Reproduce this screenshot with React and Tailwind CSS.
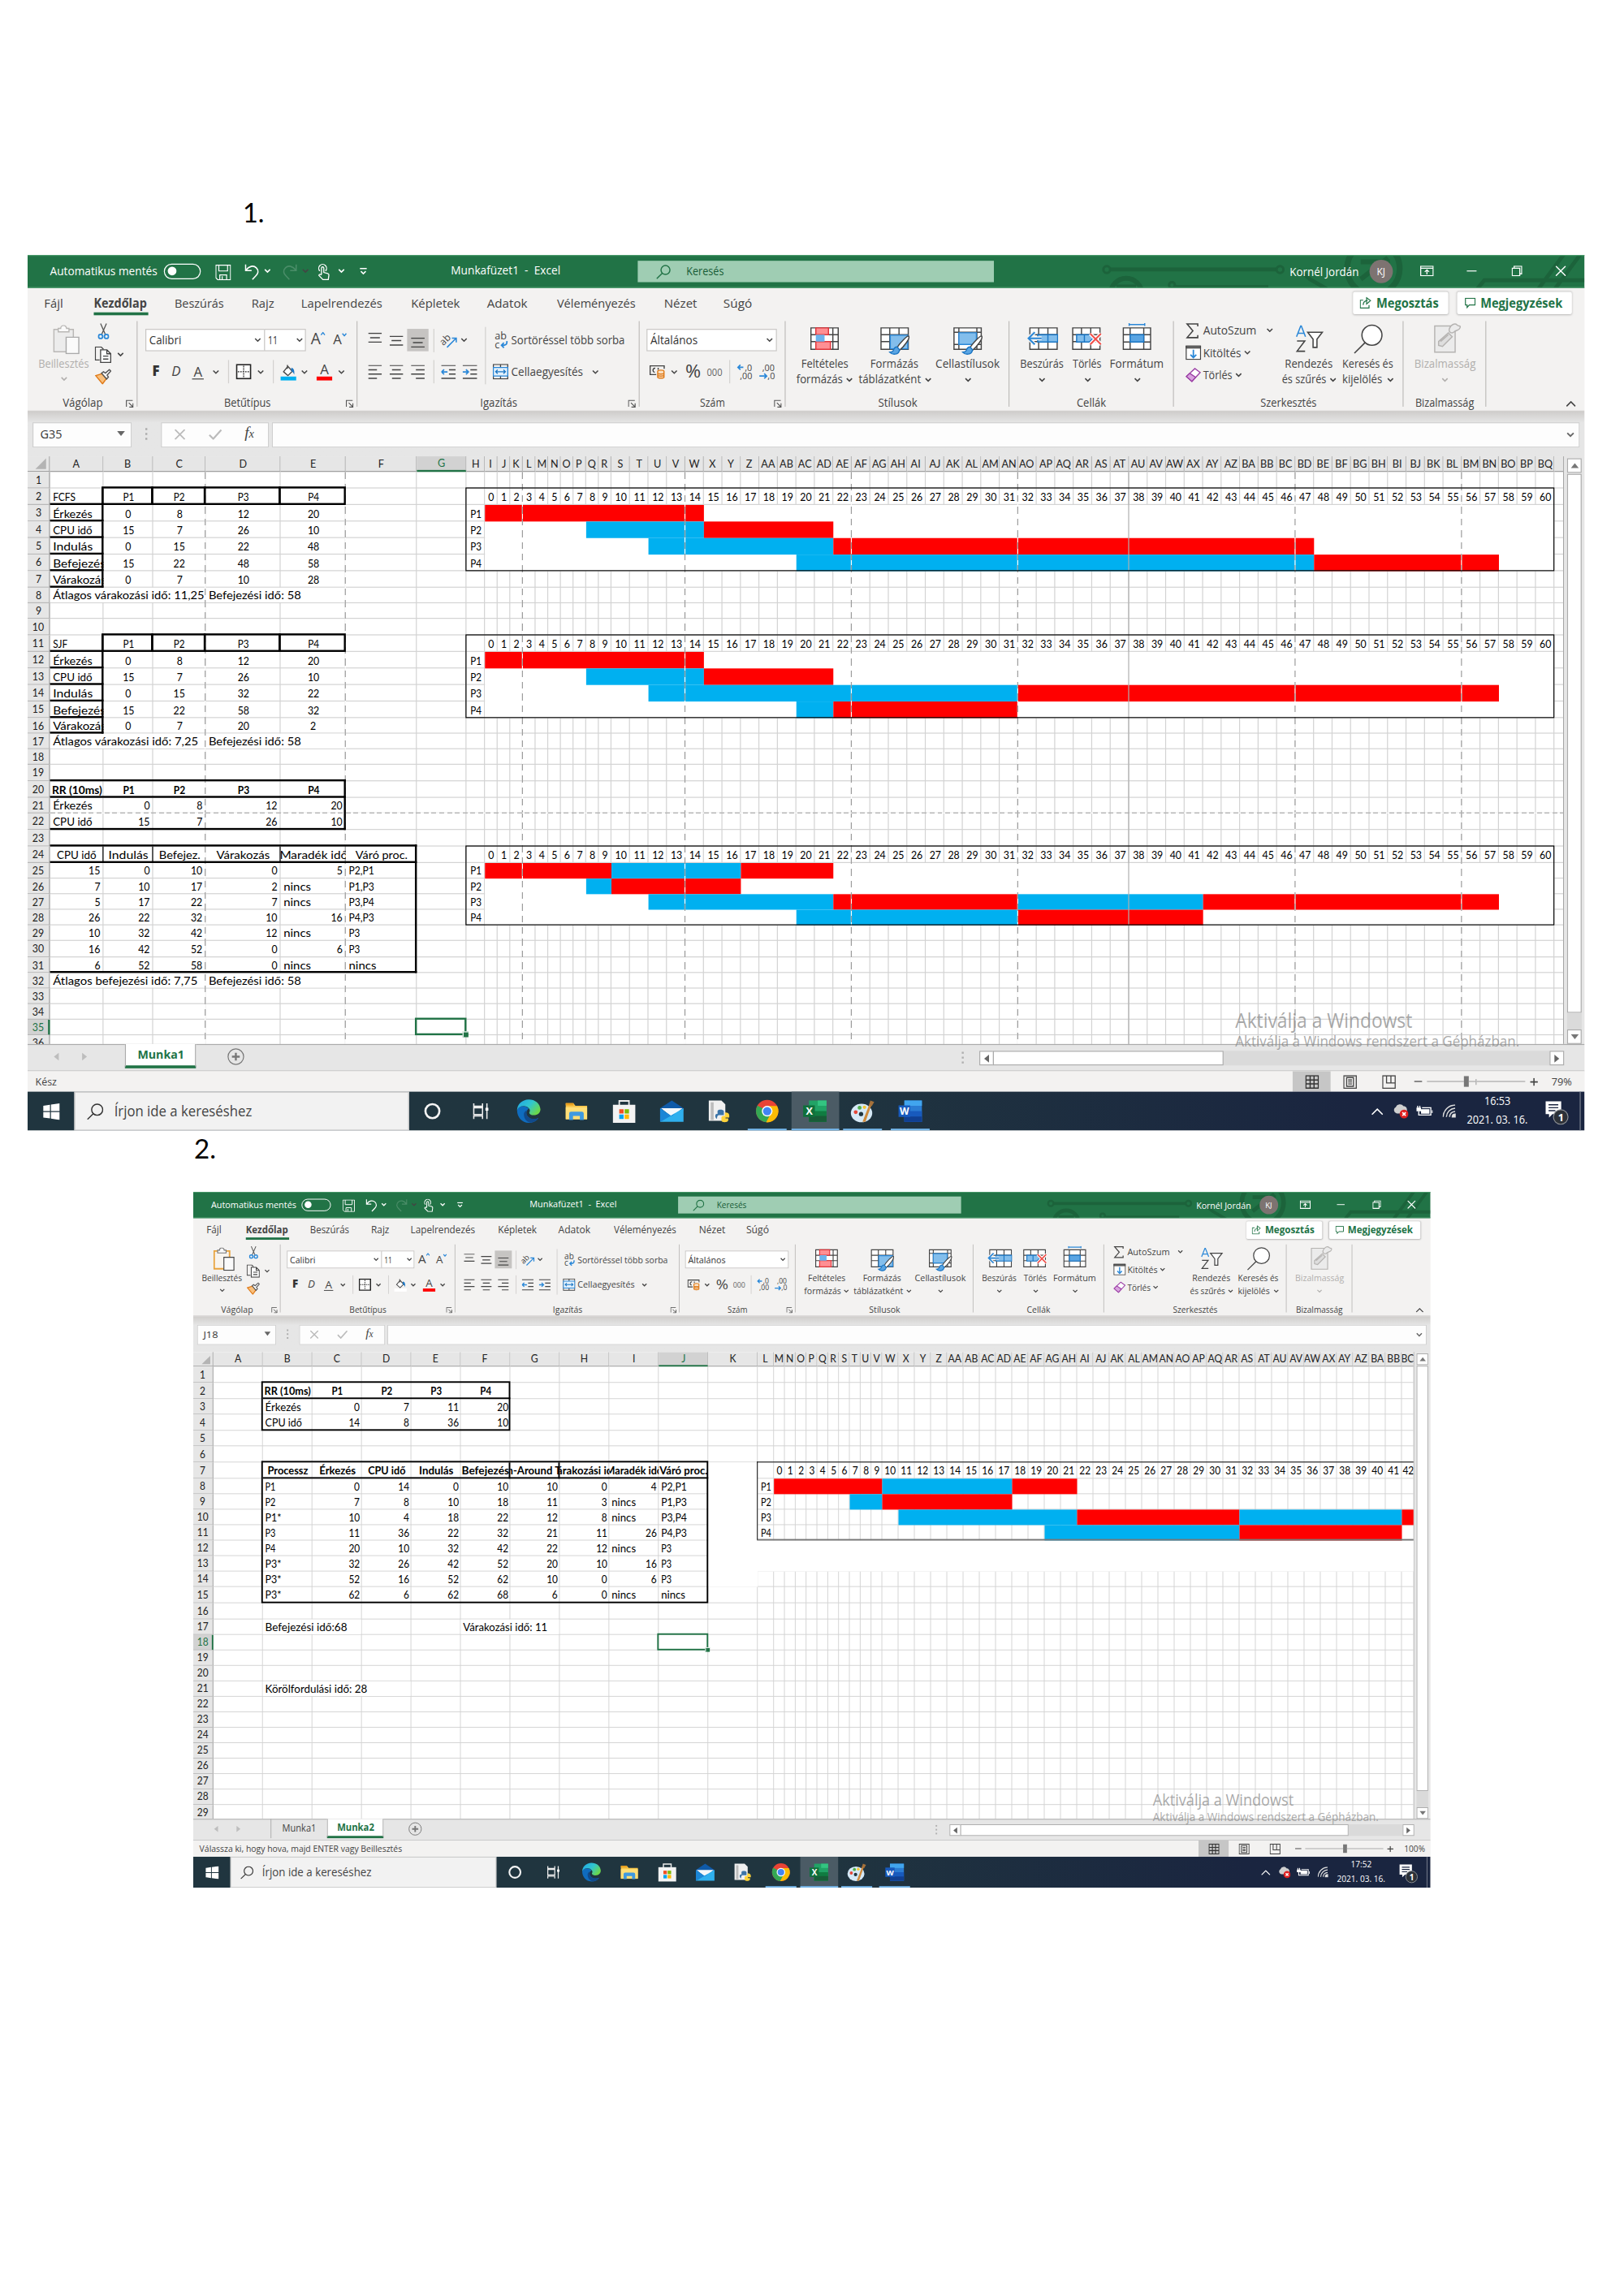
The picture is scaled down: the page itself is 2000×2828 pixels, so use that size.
import React, { useLayoutEffect, useRef } from "react";

/* ---------- text that keeps a given width ---------- */
function Fit({ w, children, className = "" }) {
  const outer = useRef(null);
  const inner = useRef(null);
  useLayoutEffect(() => {
    if (!w) return;
    inner.current.style.transform = "none";
    const a = outer.current.getBoundingClientRect().width;
    const b = inner.current.getBoundingClientRect().width;
    inner.current.style.transform = "scaleX(" + a / b + ")";
  }, [w, children]);
  if (!w) return <span className={"whitespace-pre " + className}>{children}</span>;
  return (
    <span ref={outer} className={"block shrink-0 text-left " + className} style={{ width: w }}>
      <span ref={inner} className="inline-block origin-left whitespace-pre align-top">{children}</span>
    </span>
  );
}

const Chev = ({ className = "" }) => (
  <svg viewBox="0 0 7 5" className={"h-[5px] w-[7px] shrink-0 fill-none stroke-[#444] " + className} strokeWidth="1.3"><path d="M.8.9 3.5 3.6 6.2.9" /></svg>
);
const Launcher = () => (
  <svg viewBox="0 0 8 8" className="h-2 w-2 fill-none stroke-[#555]" strokeWidth="1"><path d="M.5 7V.5H7M3 3l4 4M7.3 3.5v3.9H3.5" /></svg>
);

/* ---------- title bar ---------- */
function TitleBar() {
  return (
    <div className="relative flex h-[34px] w-full shrink-0 items-center overflow-hidden border-t border-b border-[#4b9a6c] bg-[#217346] text-[11.4px] leading-none text-white">
      <svg viewBox="0 0 1600 34" className="absolute top-0 left-0 h-[34px] w-[1600px] fill-none stroke-[#1c633b]" strokeWidth="4">
        <circle cx="1109" cy="14" r="3.5" strokeWidth="2.5" /><path d="M1113 14h170" /><circle cx="1287" cy="14" r="3.5" strokeWidth="2.5" />
        <circle cx="1129" cy="39" r="16" strokeWidth="5" /><path d="M1119 32h20" strokeWidth="5" />
        <circle cx="1176" cy="30" r="3" strokeWidth="2.5" /><path d="M1180 32h95M1306 14l12 10 24 14" />
        <circle cx="1383" cy="13" r="27" strokeWidth="6" /><path d="M1370 6h30M1370 24l28-22" strokeWidth="5" />
        <path d="M1488 36l9-11h103M1551 36l28-38M1568 36l28-38" />
      </svg>
      <div className="relative flex h-full w-full items-center pb-[1px]">
        <Fit w={110.3} className="ml-[23px]">Automatikus mentés</Fit>
        <div className="ml-[7px] flex h-[16px] w-[38px] items-center rounded-full border border-white pl-[3px]"><div className="h-[9px] w-[9px] rounded-full bg-white" /></div>
        <svg viewBox="0 0 16 16" className="mt-[3px] ml-[15px] h-4 w-4 fill-none stroke-white" strokeWidth="1"><path d="M.5.5h15v15H2.5L.5 13.500zM3.500.500v6h9v-6M4.500 15.500v-5h7v5M7 12v3" /></svg>
        <svg viewBox="0 0 15 17" className="mt-[1px] ml-[14px] h-[17px] w-[15px] fill-none stroke-white" strokeWidth="1.300"><path d="M1 .800v6.200h6.200M1.300 6.700C4.500 2.500 9 1.300 12 4.200s1.800 6-.500 8.300L8 16.200" /></svg>
        <Chev className="ml-[5px] stroke-white" />
        <svg viewBox="0 0 15 17" className="mt-[1px] ml-[12px] h-[17px] w-[15px] fill-none stroke-[#4a8d68]" strokeWidth="1.300"><path d="M14 .800v6.200H7.800M13.700 6.700C10.500 2.500 6 1.300 3 4.200s-1.800 6 .500 8.300L7 16.200" /></svg>
        <Chev className="ml-[5px] stroke-[#4a8d68]" />
        <svg viewBox="0 0 13 17" className="mt-[2px] ml-[9px] h-[17px] w-[13px] fill-none stroke-white" strokeWidth="1.100"><path d="M4 11V4.500a1.200 1.200 0 0 1 2.400 0V9l4 1c1 .300 1.300.800 1.200 1.700l-.600 4.700H5.500L1.300 12c.400-1.300 1.500-1.300 2.700-.300M2.300 7.500a4 4 0 1 1 5.800 0" /></svg>
        <Chev className="ml-[8px] stroke-white" />
        <svg viewBox="0 0 8 8" className="ml-[15px] h-2 w-2 fill-none stroke-white" strokeWidth="1.200"><path d="M.5 1h7M1.500 3.800 4 6.300l2.500-2.500" /></svg>
        <Fit w={112.5} className="-mt-px ml-[86px]">Munkafüzet1  -  Excel</Fit>
        <div className="mt-[1px] ml-[79px] flex h-[22px] w-[366px] items-center bg-[#9fcdb3] text-[#185c37]">
          <svg viewBox="0 0 15 15" className="ml-[19px] h-[15px] w-[15px] fill-none stroke-[#217346]" strokeWidth="1.200"><circle cx="9.500" cy="5.500" r="4.600" /><path d="M6.200 8.800.500 14.500" /></svg>
          <Fit w={38.500} className="ml-[16px]">Keresés</Fit>
        </div>
        <Fit w={71} className="mt-[2px] ml-[304px]">Kornél Jordán</Fit>
        <div className="ml-[11px] flex h-6 w-6 items-center justify-center rounded-full bg-[#7d7371] text-[10px]">KJ</div>
        <svg viewBox="0 0 14 11" className="ml-[28px] h-[11px] w-[14px] fill-none stroke-white" strokeWidth="1.100"><path d="M.6.600h12.800v9.800H.600zM.600 2.600h12.800M7 9V4.500M4.800 6.400 7 4.300l2.200 2.100" /></svg>
        <div className="ml-[34px] h-px w-[10px] bg-white" />
        <svg viewBox="0 0 11 11" className="ml-[36px] h-[11px] w-[11px] fill-none stroke-white" strokeWidth="1.100"><path d="M.600 2.600h7.800v7.800H.600zM2.600 2.600v-2h7.800v7.800h-2" /></svg>
        <svg viewBox="0 0 11 11" className="ml-[34px] h-[11px] w-[11px] fill-none stroke-white" strokeWidth="1.200"><path d="m.5.500 10 10M10.500.500l-10 10" /></svg>
      </div>
    </div>
  );
}

/* ---------- ribbon tabs ---------- */
function Tabs() {
  return (
    <div className="flex h-[27px] shrink-0 items-center text-[12.800px] leading-none text-[#444]">
      <Fit w={19.400} className="mt-[3px] ml-[17px]">Fájl</Fit>
      <div className="mt-[7px] ml-[32px] flex h-[21px] flex-col justify-between">
        <Fit w={54.500} className="mt-[2px] font-bold">Kezdőlap</Fit>
        <div className="h-[3px] w-[56px] bg-[#217346]" />
      </div>
      <Fit w={50.700} className="mt-[3px] ml-[27px]">Beszúrás</Fit>
      <Fit w={23.500} className="mt-[3px] ml-[28px]">Rajz</Fit>
      <Fit w={83.500} className="mt-[3px] ml-[27.500px]">Lapelrendezés</Fit>
      <Fit w={50.300} className="mt-[3px] ml-[29px]">Képletek</Fit>
      <Fit w={41.700} className="mt-[3px] ml-[28.500px]">Adatok</Fit>
      <Fit w={80.700} className="mt-[3px] ml-[29.500px]">Véleményezés</Fit>
      <Fit w={34} className="mt-[3px] ml-[29.500px]">Nézet</Fit>
      <Fit w={29.500} className="mt-[3px] ml-[27.500px]">Súgó</Fit>
      <div className="mt-[3px] ml-[617px] flex h-[23px] w-[98px] items-center rounded-xs bg-white font-bold text-[#217346] shadow-[0_0_2px_rgba(0,0,0,.25)]">
        <svg viewBox="0 0 12 12" className="ml-[7px] h-3 w-3 fill-none stroke-[#217346]" strokeWidth="1"><path d="M3.500 3.500H.500v8h9v-3M3.500 8.500c0-3 2-4.500 4.500-4.500M7 1l4 3-4 3.500z" /></svg>
        <Fit w={64} className="ml-[5px]">Megosztás</Fit>
      </div>
      <div className="mt-[3px] ml-[9px] flex h-[23px] w-[118px] items-center rounded-xs bg-white font-bold text-[#217346] shadow-[0_0_2px_rgba(0,0,0,.25)]">
        <svg viewBox="0 0 12 12" className="ml-[8px] h-[11px] w-[11px] fill-none stroke-[#217346]" strokeWidth="1.100"><path d="M.6.600h10.800v7.500H5l-2.500 2.800V8.100H.600z" /></svg>
        <Fit w={84.300} className="ml-[5px]">Megjegyzések</Fit>
      </div>
    </div>
  );
}

/* ---------- ribbon icons ---------- */
const Paste = ({ dim }) => (
  <svg viewBox="0 0 28 30" className="h-[30px] w-[28px] fill-none" strokeWidth="1.200">
    <path d="M1 4.500h20v23H1z" stroke={dim ? "#b9b7b5" : "#e8a33d"} strokeWidth={dim ? 1.200 : 2} fill={dim ? "#ececec" : "#f8f4ee"} />
    <path d="M5.500 7V3.500H8a3 3 0 0 1 6 0h2.500V7z" stroke={dim ? "#b9b7b5" : "#777"} fill="#fafafa" />
    <path d="M13.600 12.600h13v16.800h-13z" stroke={dim ? "#aaa" : "#444"} fill="#fafafa" />
  </svg>
);
const Cut = () => (
  <svg viewBox="0 0 12 17" className="h-[17px] w-[12px] fill-none stroke-[#555]" strokeWidth="1.100"><path d="M3 .5 8 12M9 .5 4 12" /><g className="stroke-[#2b88d8]" strokeWidth="1.500"><circle cx="3" cy="13.800" r="2.100" /><circle cx="9" cy="13.800" r="2.100" /></g></svg>
);
const Copy = () => (
  <svg viewBox="0 0 17 17" className="h-[17px] w-[17px] fill-none stroke-[#444]" strokeWidth="1.100"><path d="M5 14H.600V.600h6L9 3" /><path d="M6 3.600h6.500l3.900 3.900v8.900H6zM12.400 3.800v3.800h3.800M8.500 10h5.500M8.500 13h5.500" fill="#fff" /></svg>
);
const Painter = () => (
  <svg viewBox="0 0 17 16" className="h-4 w-[17px] fill-none stroke-[#555]" strokeWidth="1.200"><path d="m1 7 6.500-2 4.500 5-4 5.500z" className="fill-[#f9c07d] stroke-[#e07b1a]" /><path d="m7 4.500 2-1.500 2 1.500L15 .800l1.500 1.500L12.700 6.500l1.300 2-1.800 2z" fill="#fff" /></svg>
);
const Lines = ({ kind }) => {
  const d = { top: "M0 .600h14M2 5.100h10M0 9.600h14", left: "M0 .600h14M0 5h9M0 9.400h14M0 13.800h9", center: "M0 .600h14M2.500 5h9M0 9.400h14M2.500 13.800h9", right: "M0 .600h14M5 5h9M0 9.400h14M5 13.800h9" }[kind];
  return <svg viewBox="0 0 14 15" className="h-[15px] w-[14px] shrink-0 fill-none stroke-[#444]" strokeWidth="1.200"><path d={d} /></svg>;
};
const Indent = ({ flip }) => (
  <svg viewBox="0 0 15 15" className="h-[15px] w-[15px] fill-none" strokeWidth="1.200"><path d="M0 .600h15M8 5h7M8 9.400h7M0 13.800h15" className="stroke-[#444]" /><path d={flip ? "M0 7.200h6M3.500 4.700 6 7.200 3.500 9.700" : "M.5 7.200h6M3 4.700.5 7.200 3 9.700"} className="stroke-[#2b88d8]" strokeWidth="1.400" /></svg>
);
const GridIcon = ({ children }) => (
  <svg viewBox="0 0 32 34" className="h-[34px] w-[32px] fill-none stroke-[#444]" strokeWidth="1.200">{children}</svg>
);
const Brush = () => (
  <g><path d="M30.500 13.500c-1.500-1-10 8-12 12l2.500 2.500c4-3 11-12 9.500-14.500z" fill="#fff" /><path d="M18.500 24.500c-3 0-3.500 2.500-4 4-.500 1-2 1.500-3.500 1.500 2.500 3 9.500 3 10-2.500z" className="fill-[#5aa5e3] stroke-[#1b76c4]" /></g>
);
const icons = {
  cond: <GridIcon><path d="M2 5h28v22H2zM2 12h28M2 19h28M8 5v22M24.500 5v22" fill="#fff" /><path d="M7 5h13v7H7zM7 19h15v8H7z" className="fill-[#ff8f93] stroke-[#e0343a]" /><path d="M7 12h9v7H7z" className="fill-[#6db3ec] stroke-none" /></GridIcon>,
  table: <GridIcon><path d="M2 5h28v22H2zM2 12h28M2 19h28M11 5v22M20.500 5v22" fill="#fff" /><path d="M11.500 12.500h18v14h-18z" className="fill-[#83beec] stroke-[#2b88d8]" /><Brush /></GridIcon>,
  styles: <GridIcon><path d="M2 5h28v22H2zM2 9.500h28M2 22h28M7 5v22M25.500 5v22" fill="#fff" /><path d="M7 10h18v12H7z" className="fill-[#83beec] stroke-[#2b88d8]" /><Brush /></GridIcon>,
  insert: <GridIcon><path d="M3 5h28v22H3zM3 12h28M3 19h28M12 5v22M21.500 5v22" fill="#fff" /><path d="M11 12h20.500v7.500H11zM21.500 12v7.500" className="fill-[#83beec] stroke-[#1b76c4]" /><path d="M15 15.700H1.500M8 9.500l-6.500 6.200L8 22" className="stroke-[#f3f2f1]" strokeWidth="4" /><path d="M15 15.700H1.500M8 9.500l-6.500 6.200L8 22" className="stroke-[#2b88d8]" strokeWidth="1.700" /></GridIcon>,
  del: <GridIcon><path d="M1 5h28v22H1zM1 12h28M1 19h28M10 5v22M19.500 5v22" fill="#fff" /><path d="M5 12h13l4 3.700-4 3.800H5zM13 12v7" className="fill-[#83beec] stroke-[#1b76c4]" /><path d="m19 11 11 11M30 11 19 22" className="stroke-white" strokeWidth="4" /><path d="m19 11 11 11M30 11 19 22" className="stroke-[#f0504a]" strokeWidth="1.700" /></GridIcon>,
  format: <GridIcon><path d="M2 5h28v22H2zM2 12h28M2 19.500h28M9 5v22M23 5v22" fill="#fff" /><path d="M9 12h14v7.500H9z" className="fill-[#5aa5e3] stroke-[#1b76c4]" /><path d="M8 1.500h16M8 0v3M24 0v3" className="stroke-[#2b88d8]" /></GridIcon>,
  sort: <svg viewBox="0 0 32 34" className="h-[34px] w-[32px] fill-none stroke-[#444]" strokeWidth="1.300"><path d="m3 14 4.300-11h.600L12.200 14M4.600 10.500h6" className="stroke-[#2b88d8]" /><path d="M3.500 18.500h8L3.500 29h8.300" /><path d="M14.500 9.500h15l-5.500 7v8.500h-4v-8.500z" fill="#fff" /></svg>,
  find: <svg viewBox="0 0 32 34" className="h-[34px] w-[32px] fill-none stroke-[#444]" strokeWidth="1.300"><circle cx="19.500" cy="12.500" r="10.300" fill="#fff" /><path d="M12.500 20 1.500 31" /></svg>,
  sens: <svg viewBox="0 0 32 34" className="h-[34px] w-[32px] fill-[#ebebeb] stroke-[#b5b3b1]" strokeWidth="1.200"><path d="M5 3h21v27H5z" /><path d="m9 19 10-9 4 4-10 10-4-1zM11 19l8-7" fill="#dedede" /><path d="M20 6c2-5 6-6 8-4s4 0 3 3-4 2-6 4-6 1-5-3z" /></svg>,
};
const Clr = { dim: "text-[#b1afad]", norm: "text-[#444]" };
function Big({ icon, a, wa, b, wb, cls, dim }) {
  return (
    <div className={"flex shrink-0 flex-col items-center " + cls + " " + (dim ? Clr.dim : Clr.norm)}>
      <div className="mt-[9px] h-[34px]">{icon}</div>
      <div className="mt-[1px] flex h-[14px] items-center"><Fit w={wa}>{a}</Fit></div>
      <div className="mt-[2px] flex h-[14px] items-center gap-[4px]">{b && <Fit w={wb}>{b}</Fit>}<Chev className={dim ? "stroke-[#b1afad]" : ""} /></div>
    </div>
  );
}
function Group({ cls, label, lw, launcher, children }) {
  return (
    <div className={"relative flex h-[99px] shrink-0 flex-col justify-between " + cls}>
      {children}
      <div className="flex h-[16px] items-center justify-center"><Fit w={lw}>{label}</Fit></div>
      {launcher && <div className="absolute right-[4px] bottom-[3px]"><Launcher /></div>}
      <div className="absolute top-[7px] right-0 h-[88px] w-px bg-[#bfbdbb]" />
    </div>
  );
}
const Sep = ({ cls }) => <div className={"h-[24px] w-px shrink-0 bg-[#d3d1cf] " + cls} />;

function Ribbon({ second }) {
  return (
    <div className="flex h-[99px] shrink-0 text-[11.300px] leading-none text-[#444]">
      <Group cls="w-[113px]" label="Vágólap" lw={41.300} launcher>
        <div className="flex">
          <div className={"ml-[9px] flex w-[56px] flex-col items-center " + (second ? "" : "text-[#b1afad]")}>
            <div className="mt-[11px] ml-[5px]"><Paste dim={!second} /></div>
            <div className="mt-[3px] flex h-[14px] items-center"><Fit w={52}>Beillesztés</Fit></div>
            <Chev className={"mt-[6px] " + (second ? "" : "stroke-[#b1afad]")} />
          </div>
          <div className="mt-[9px] ml-[4px] flex flex-col gap-[6.500px]">
            <div className="ml-[3px]"><Cut /></div>
            <div className="flex items-center gap-[6px]"><Copy /><Chev /></div>
            <Painter />
          </div>
        </div>
      </Group>
      <Group cls="w-[226px]" label="Betűtípus" lw={47.800} launcher>
        <div className="flex flex-col gap-[9px]">
          <div className="mt-[15px] ml-[8px] flex h-[23px] items-center">
            <div className="flex h-full w-[123px] items-center justify-between border border-[#c8c6c4] bg-white pr-[3px] pl-[3px] text-[#333]"><Fit w={33}>Calibri</Fit><Chev /></div>
            <div className="-ml-px flex h-full w-[43px] items-center justify-between border border-[#c8c6c4] bg-white pr-[2px] pl-[3px] text-[#333]"><Fit w={10}>11</Fit><Chev /></div>
            <div className="-mt-[3px] ml-[5px] flex w-[16px] text-[16px]"><span>A</span><svg viewBox="0 0 5 4" className="mt-px h-1 w-[5px] shrink-0 fill-none stroke-[#2b88d8]" strokeWidth="1.200"><path d="M.5 3.300 2.500.800l2 2.500" /></svg></div>
            <div className="-mt-px ml-[7px] flex w-[16px] items-start text-[14px]"><span>A</span><svg viewBox="0 0 5 4" className="h-1 w-[5px] shrink-0 fill-none stroke-[#2b88d8]" strokeWidth="1.200"><path d="M.5.700 2.500 3.200l2-2.500" /></svg></div>
          </div>
          <div className="flex h-[24px] items-center text-[14px]">
            <span className="-mt-[2px] ml-[15px] w-[8px] font-extrabold text-[#333]">F</span>
            <span className="-mt-[2px] ml-[12px] w-[11px] italic">D</span>
            <span className="ml-[10px] w-[12px] border-b border-[#444] text-center">A</span>
            <Chev className="ml-[9px]" />
            <Sep cls="ml-[9px]" />
            <svg viewBox="0 0 16 16" className="ml-[7px] h-4 w-4 fill-white stroke-[#222]" strokeWidth="1.500"><path d="M.8.800h14.400v14.400H.800z" /><path d="M8 2v12M2 8h12" strokeWidth="1" strokeDasharray="1.500 1" /></svg>
            <Chev className="ml-[6px]" />
            <Sep cls="ml-[9px]" />
            <div className="ml-[7px] flex w-4 flex-col items-center">
              <svg viewBox="0 0 16 13" className="h-[13px] w-4 fill-none stroke-[#444]" strokeWidth="1.100"><path d="M7 1v4M7.500 2.500 3 8l4.500 4L12 7.500 7.500 2.500z" fill="#fff" /><path d="M11 4c2.500 0 3.500 3 3 7-1-2-1.500-3-3-3.500z" className="fill-[#1b76c4] stroke-none" /></svg>
              <div className={"h-[4px] w-4 " + (second ? "bg-white" : "bg-[#00b0f0]")} />
            </div>
            <Chev className="ml-[5px]" />
            <div className="ml-[9px] flex w-4 flex-col items-center"><span className="h-[13px] leading-[12px]">A</span><div className="h-[4px] w-4 bg-[#ff0000]" /></div>
            <Chev className="ml-[6px]" />
          </div>
        </div>
      </Group>
      <Group cls="w-[290px]" label="Igazítás" lw={38.300} launcher>
        <div className="flex">
          <div className="flex flex-col gap-[9px]">
            <div className="mt-[15px] flex h-[23px] items-center">
              <div className="ml-[11px]"><Lines kind="top" /></div>
              <div className="mt-[5px] ml-[8px]"><Lines kind="top" /></div>
              <div className="ml-[4px] flex h-[23px] w-[22px] items-end justify-center bg-[#c6c4c2]"><div className="-mb-[1px]"><Lines kind="top" /></div></div>
              <Sep cls="ml-[5px]" />
              <svg viewBox="0 0 17 16" className="ml-[7px] h-4 w-[17px] overflow-visible fill-none stroke-[#2b88d8]" strokeWidth="1.300"><text x="-1" y="10" transform="rotate(-45 5 8)" className="fill-[#444] stroke-none text-[10px]">ab</text><path d="m6 15 9-9M11 5.500h4.500V10" /></svg>
              <Chev className="ml-[3px]" />
            </div>
            <div className="flex h-[24px] items-center">
              <div className="ml-[11px]"><Lines kind="left" /></div>
              <div className="ml-[8px]"><Lines kind="center" /></div>
              <div className="ml-[8px]"><Lines kind="right" /></div>
              <Sep cls="ml-[9px]" />
              <div className="ml-[7px]"><Indent /></div>
              <div className="ml-[7px]"><Indent flip /></div>
            </div>
          </div>
          <div className="mt-[13px] ml-[8px] h-[59px] w-px bg-[#d3d1cf]" />
          <div className="flex flex-col gap-[9px]">
            <div className="mt-[15px] flex h-[23px] items-center">
              <svg viewBox="0 0 14 18" className="ml-[9px] h-[18px] w-[14px] overflow-visible fill-none stroke-[#2b88d8]" strokeWidth="1.500"><text x="0" y="8" className="fill-[#444] stroke-none text-[10.500px]">ab</text><text x="0" y="17" className="fill-[#444] stroke-none text-[10.500px]">c</text><path d="M12.500 9.500c.500 4-2 4.500-5.500 4.300M9.500 11.200 7 13.800l2.500 2.600" /></svg>
              <Fit w={116.700} className="ml-[3px]">Sortöréssel több sorba</Fit>
            </div>
            <div className="flex h-[24px] items-center">
              <svg viewBox="0 0 16 16" className="ml-[7px] h-4 w-4 fill-none stroke-[#444]" strokeWidth="1.100"><path d="M.6.600h14.800v14.800H.600zM8 .600v14.800" /><path d="M.6 3.600h14.800v8.800H.600z" className="fill-[#e3f1fc] stroke-[#2b88d8]" /><path d="M3 8h10M5 6 3 8l2 2M11 6l2 2-2 2" className="stroke-[#1b76c4]" /></svg>
              <Fit w={73.800} className="ml-[3px]">Cellaegyesítés</Fit>
              <Chev className="ml-[9px]" />
            </div>
          </div>
        </div>
      </Group>
      <Group cls="w-[150px]" label="Szám" lw={25.600} launcher>
        <div className="flex flex-col gap-[9px]">
          <div className="mt-[15px] ml-[7px] flex h-[23px] w-[134px] items-center justify-between border border-[#c8c6c4] bg-white px-[3px] text-[#333]"><Fit w={48.500}>Általános</Fit><Chev /></div>
          <div className="flex h-[24px] items-center">
            <svg viewBox="0 0 16 16" className="ml-[10px] h-4 w-4 fill-none stroke-[#444]" strokeWidth="1.200"><path d="M7 11H.700V2h14.500v3M6 4.500c-3-.500-3 4-.500 4M9 4v2" /><path d="M8.500 7.500c0-1.500 6.500-1.500 6.500 0v6c0 1.500-6.500 1.500-6.500 0zM8.500 9.500c0 1.300 6.500 1.300 6.500 0M8.500 11.500c0 1.300 6.500 1.300 6.500 0" className="fill-[#fbe0c0] stroke-[#e07b1a]" /></svg>
            <Chev className="ml-[6px]" />
            <Fit w={16} className="-mt-[2px] ml-[8px] text-[18px]">%</Fit>
            <Fit w={16} className="-mt-px ml-[6px] text-[10px] text-[#666]">000</Fit>
            <Sep cls="ml-[7px]" />
            <svg viewBox="0 0 16 16" className="ml-[7px] h-4 w-4 overflow-visible fill-none stroke-[#2b88d8]" strokeWidth="1.400"><path d="M6.500 3.500H1M3.500 1 1 3.500 3.500 6" /><text x="8" y="7" className="fill-[#444] stroke-none text-[9px]">,0</text><text x="3" y="15.500" className="fill-[#444] stroke-none text-[9px]">,00</text></svg>
            <svg viewBox="0 0 16 16" className="ml-[7px] h-4 w-4 overflow-visible fill-none stroke-[#2b88d8]" strokeWidth="1.400"><path d="M0 12.500h7.500M5 10l2.500 2.500L5 15" /><text x="3" y="7" className="fill-[#444] stroke-none text-[9px]">,00</text><text x="8.500" y="15.500" className="fill-[#444] stroke-none text-[9px]">,0</text></svg>
          </div>
        </div>
      </Group>
      <Group cls="w-[230px]" label="Stílusok" lw={40.300}>
        <div className="flex">
          <Big cls="w-[80px]" icon={icons.cond} a="Feltételes" wa={48.500} b="formázás" wb={47.700} />
          <Big cls="w-[64px]" icon={icons.table} a="Formázás" wa={49.400} b="táblázatként" wb={64} />
          <Big cls="w-[86px]" icon={icons.styles} a="Cellastílusok" wa={66} />
        </div>
      </Group>
      <Group cls="w-[169px]" label="Cellák" lw={30.200}>
        <div className="flex">
          <Big cls="w-[67px]" icon={icons.insert} a="Beszúrás" wa={44.600} />
          <Big cls="w-[26px]" icon={icons.del} a="Törlés" wa={29.500} />
          <Big cls="w-[76px]" icon={icons.format} a="Formátum" wa={55.500} />
        </div>
      </Group>
      <Group cls="w-[236px]" label="Szerkesztés" lw={57.600}>
        <div className="flex">
          <div className="mt-[5px] flex w-[109px] flex-col pl-[12px]">
            <div className="flex h-[23px] items-center">
              <svg viewBox="0 0 14 16" className="h-4 w-[14px] fill-none stroke-[#444]" strokeWidth="1.300"><path d="M12.500 3.500V1h-11l6 7-6 7h11v-2.500" /></svg>
              <Fit w={54.800} className="ml-[4px]">AutoSzum</Fit><Chev className="ml-[10px]" />
            </div>
            <div className="flex h-[23px] items-center">
              <svg viewBox="0 0 16 15" className="h-[15px] w-4 fill-white stroke-[#444]" strokeWidth="1.100"><path d="M.6.600h14.800v13.800H.600z" /><path d="M.6.600h14.800v2H.600z" fill="#777" /><path d="M8 4.500v8M5 9.500l3 3 3-3" className="fill-none stroke-[#2b88d8]" strokeWidth="1.500" /></svg>
              <Fit w={39} className="ml-[2px]">Kitöltés</Fit><Chev className="ml-[3px]" />
            </div>
            <div className="flex h-[23px] items-center">
              <svg viewBox="0 0 16 15" className="h-[15px] w-4 fill-white stroke-[#9b3fa5]" strokeWidth="1.100"><path d="M.8 9 9.500.800l5.500 4L6.500 14z" /><path d="m.8 9 3.500-3.300 6 4L6.500 14z" className="fill-[#d9a3df]" /></svg>
              <Fit w={30} className="ml-[2px]">Törlés</Fit><Chev className="ml-[3px]" />
            </div>
          </div>
          <Big cls="w-[60px]" icon={icons.sort} a="Rendezés" wa={49.100} b="és szűrés" wb={45.600} />
          <Big cls="w-[61px]" icon={icons.find} a="Keresés és" wa={52.300} b="kijelölés" wb={41.100} />
        </div>
      </Group>
      <Group cls="w-[85px]" label="Bizalmasság" lw={60.400}>
        <Big cls="w-full" icon={icons.sens} a="Bizalmasság" wa={63.200} dim />
      </Group>
      <svg viewBox="0 0 10 6" className="mt-[89px] ml-[82px] h-[6px] w-[10px] fill-none stroke-[#444]" strokeWidth="1.300"><path d="M.5 5.500 5 1l4.500 4.500" /></svg>
    </div>
  );
}

function FormulaBar({ name, nw }) {
  const box = "flex h-[26px] items-center border border-[#cfcfcf] bg-[#fdfdfd]";
  return (
    <div className="flex h-[47px] shrink-0 items-start border-t border-[#d0cecc] bg-linear-to-b from-[#cfcdcb] from-0% to-[#e6e6e6] to-25% pt-[10.500px] text-[11.300px] leading-none text-[#333]">
      <div className={box + " ml-[5px] w-[102px] justify-between pr-[6px] pl-[7px]"}><Fit w={nw}>{name}</Fit><div className="mb-[3px] h-0 w-0 border-x-4 border-t-[5px] border-x-transparent border-t-[#666]" /></div>
      <div className="mt-[6px] ml-[14px] flex w-[2px] flex-col gap-[3px]"><i className="h-[2px] bg-[#aaa]" /><i className="h-[2px] bg-[#aaa]" /><i className="h-[2px] bg-[#aaa]" /></div>
      <div className={box + " ml-[14px] w-[111px]"}>
        <svg viewBox="0 0 11 11" className="ml-[13px] h-[11px] w-[11px] fill-none stroke-[#bbb]" strokeWidth="1.500"><path d="m.5.500 10 10M10.500.500l-10 10" /></svg>
        <svg viewBox="0 0 14 11" className="ml-[24px] h-[11px] w-[14px] fill-none stroke-[#bbb]" strokeWidth="1.800"><path d="m.8 6 4 4L13 .800" /></svg>
        <span className="-mt-[3px] ml-[23px] font-['Liberation_Serif',serif] text-[16px] text-[#444] italic">f<span className="text-[12px]">x</span></span>
      </div>
      <div className={box + " ml-[3px] w-[1344px] justify-end pr-[4px]"}><Chev className="h-[6px] w-[9px] stroke-[#666]" /></div>
    </div>
  );
}

/* ---------- worksheet ---------- */
const colName = (i) => (i < 26 ? "" : String.fromCharCode(64 + Math.floor(i / 26))) + String.fromCharCode(65 + (i % 26));
const at = (c, r, c2 = c, r2 = r) => ({ gridColumn: c + 2 + " / " + (c2 + 3), gridRow: r + 1 + " / " + (r2 + 2) });
const just = { l: "justify-start", c: "justify-center", r: "justify-end" };
const origin = { l: "origin-left", c: "origin-center", r: "origin-right" };

function Sheet({ s }) {
  const nc = s.cols.length;
  const nr = s.rows.length;
  const tpl = {
    gridTemplateColumns: s.head + "px " + s.cols.map((w) => w + "px").join(" "),
    gridTemplateRows: s.headH + "px " + s.rows.map((h) => h + "px").join(" "),
  };
  return (
    <div className={"grid h-[604px] w-[1579px] shrink-0 overflow-hidden border-r border-[#9f9f9f] bg-white font-['Lato',sans-serif] leading-none text-black " + s.font} style={tpl}>
      <div className="flex items-end justify-end border-r border-b border-[#9f9f9f] bg-[#e6e6e6] pr-[3px] pb-[2px]" style={at(-1, 0)}>
        <div className="h-0 w-0 border-b-[11px] border-l-[11px] border-b-[#b4b4b4] border-l-transparent" />
      </div>
      {s.cols.map((_, i) => (
        <div key={i} style={at(i, 0)} className={"flex items-center justify-center overflow-hidden border-r border-r-[#b8b8b8] " + (i === s.sel[0] ? "border-b-2 border-b-[#217346] bg-[#d2d2d2] text-[#217346]" : "border-b border-b-[#9f9f9f] bg-[#e6e6e6] text-[#222]")}>
          <span className="shrink-0 scale-x-[0.9]">{i === s.hideCol ? "" : colName(i)}</span>
        </div>
      ))}
      {s.rows.map((_, i) => (
        <div key={i} style={at(-1, i + 1)} className={"flex items-center justify-center overflow-hidden border-b border-b-[#b8b8b8] " + (i + 1 === s.sel[1] ? "border-r-2 border-r-[#217346] bg-[#d2d2d2] text-[#217346]" : "border-r border-r-[#9f9f9f] bg-[#e6e6e6] text-[#222]")}>
          <span className="shrink-0 scale-x-[0.88]">{i + 1}</span>
        </div>
      ))}
      {s.cols.map((_, i) => <div key={i} style={at(i, 1, i, nr)} className="border-r border-[#d3d3d3]" />)}
      {s.rows.map((_, i) => <div key={i} style={at(0, i + 1, nc - 1, i + 1)} className="border-b border-[#d3d3d3]" />)}
      {s.blank.map((b, i) => <div key={i} style={at(...b)} className="bg-white" />)}
      {s.bars.map(([c, r, c2, k], i) => <div key={i} style={at(c, r, c2)} className={k === "r" ? "bg-[#ff0000]" : "bg-[#00b0f0]"} />)}
      {s.clear.map((b, i) => <div key={i} style={at(...b)} className="mr-px mb-px bg-white" />)}
      {s.breaks.map((b, i) => (
        <div key={i} style={at(b[0], 1, b[0], nr)} className={b[1] ? "border-r border-[#b0b0b0]" : "border-r border-white"} />
      ))}
      {s.breaks.filter((b) => !b[1]).map((b, i) => (
        <div key={i} style={at(b[0], 1, b[0], nr)} className="flex justify-end"><div className="h-full w-px bg-[repeating-linear-gradient(to_bottom,#9c9c9c_0_7px,transparent_7px_12px)]" /></div>
      ))}
      {s.hbreak > 0 && <div style={at(0, s.hbreak, nc - 1, s.hbreak)} className="flex items-end"><div className="h-px w-full bg-[repeating-linear-gradient(to_right,#b0b0b0_0_5px,#fff_5px_8px)]" /></div>}
      {s.boxes.map(([c, r, c2, r2, cls], i) => <div key={i} style={at(c, r, c2, r2)} className={"border-black " + cls} />)}
      {s.cells.map(([c, r, text, al = "l", c2 = c, bold], i) => {
        const w = s.widths[(bold ? "*" : "") + text];
        return (
          <div key={i} style={at(c, r, c2)} className={"flex items-center overflow-hidden " + just[al] + (al === "l" ? " pl-[3px]" : al === "r" ? " pr-[3px]" : "") + (bold ? " font-bold" : "")}>
            <Fit w={w} className={"shrink-0 " + (w ? "" : "scale-x-[0.88] " + origin[al])}>{text}</Fit>
          </div>
        );
      })}
      <div style={at(...s.sel)} className="relative -mt-[2px] -ml-[2px] border-2 border-[#217346]"><div className="absolute -right-[4px] -bottom-[4px] h-[6px] w-[6px] border-t border-l border-white bg-[#217346]" /></div>
    </div>
  );
}

const fill = (n, v) => Array(n).fill(v);
const M = "-ml-[2px] -mt-[2px] border-2";
const axis = (row, first, n) => fill(n, 0).map((_, i) => [first + i, row, String(i), "c"]);
const procs = (col, row) => ["P1", "P2", "P3", "P4"].map((p, i) => [col, row + i, p, "c"]);
/* bar: [row, from, to, colour] on a time axis whose zero is column `zero` */
const gantt = (zero, list) => list.map(([r, a, b, k]) => [zero + a, r, zero + b - 1, k]);

const summary = (row, title, data) => [
  [0, row, title],
  ...["P1", "P2", "P3", "P4"].map((p, i) => [1 + i, row, p, "c"]),
  ...["Érkezés", "CPU idő", "Indulás", "Befejezés", "Várakozás"].map((t, i) => [0, row + 1 + i, t]),
  ...data.flatMap((line, j) => line.map((v, i) => [1 + i, row + 1 + j, String(v), "c"])),
];
const summaryBoxes = (row) => [
  ...[1, 2, 3, 4].map((c) => [c, row, c, row, M]),
  ...[0, 1, 2, 3, 4, 5].map((i) => [0, row + i, 0, row + i, "border-r-2 border-b-2"]),
];
const mixed = (c0, r0, rows) => rows.flatMap((line, j) => line.map((v, i) => [c0 + i, r0 + j, String(v), typeof v === "number" ? "r" : "l"]));

const sheet1 = {
  head: 23, headH: 16, font: "text-[11.700px]",
  cols: [55, 51, 54, 77, 67, 73, 51, 19, ...fill(10, 13), ...fill(51, 19), 10],
  rows: [17, ...fill(6, 17), 16, 16, 17, ...fill(5, 17), 16, 16, 16, 17, 17, 16, 17, 17, 17, 16, 16, 16, 16, 16, 17, 16, 16, 16, 16, 16, 16],
  sel: [6, 35], hideCol: 69,
  blank: [[8, 3, 68, 6], [8, 12, 68, 15], [8, 25, 68, 28]],
  clear: [[0, 8, 2, 8], [3, 8, 4, 8], [0, 17, 2, 17], [3, 17, 4, 17], [0, 32, 2, 32], [3, 32, 4, 32]],
  bars: gantt(8, [
    [3, 0, 15, "r"], [4, 8, 15, "b"], [4, 15, 22, "r"], [5, 12, 22, "b"], [5, 22, 48, "r"], [6, 20, 48, "b"], [6, 48, 58, "r"],
    [12, 0, 15, "r"], [13, 8, 15, "b"], [13, 15, 22, "r"], [14, 12, 32, "b"], [14, 32, 58, "r"], [15, 20, 22, "b"], [15, 22, 32, "r"],
    [25, 0, 10, "r"], [25, 10, 17, "b"], [25, 17, 22, "r"], [26, 8, 10, "b"], [26, 10, 17, "r"], [27, 12, 22, "b"], [27, 22, 32, "r"], [27, 32, 42, "b"], [27, 42, 58, "r"], [28, 20, 32, "b"], [28, 32, 42, "r"],
  ]),
  breaks: [[2], [4], [10], [21], [30], [39], [45, true], [54], [63]],
  hbreak: 21,
  boxes: [
    ...summaryBoxes(2), ...summaryBoxes(11),
    [0, 20, 4, 22, "-mt-[2px] border-y-2 border-r-2"], [0, 20, 4, 20, "border-b-2"],
    [0, 24, 5, 31, "-mt-[2px] border-y-2 border-r-2"], [0, 24, 5, 24, "border-b-2"],
    [0, 24, 0, 24, "border-r"], [1, 24, 1, 24, "border-r"], [3, 24, 3, 24, "border-r"],
    [7, 2, 68, 6, "-ml-px -mt-px border"], [7, 11, 68, 15, "-ml-px -mt-px border"], [7, 24, 68, 28, "-ml-px -mt-px border"],
  ],
  cells: [
    ...summary(2, "FCFS", [[0, 8, 12, 20], [15, 7, 26, 10], [0, 15, 22, 48], [15, 22, 48, 58], [0, 7, 10, 28]]),
    [0, 8, "Átlagos várakozási idő: 11,25", "l", 2], [3, 8, "Befejezési idő: 58", "l", 4],
    ...summary(11, "SJF", [[0, 8, 12, 20], [15, 7, 26, 10], [0, 15, 32, 22], [15, 22, 58, 32], [0, 7, 20, 2]]),
    [0, 17, "Átlagos várakozási idő: 7,25", "l", 2], [3, 17, "Befejezési idő: 58", "l", 4],
    ...["RR (10ms)", "P1", "P2", "P3", "P4"].map((t, i) => [i, 20, t, "c", i, true]),
    ...mixed(0, 21, [["Érkezés", 0, 8, 12, 20], ["CPU idő", 15, 7, 26, 10]]),
    ...["CPU idő", "Indulás", "Befejez.", "Várakozás", "Maradék idő", "Váró proc."].map((t, i) => [i, 24, t, "c"]),
    ...mixed(0, 25, [[15, 0, 10, 0, 5, "P2,P1"], [7, 10, 17, 2, "nincs", "P1,P3"], [5, 17, 22, 7, "nincs", "P3,P4"], [26, 22, 32, 10, 16, "P4,P3"], [10, 32, 42, 12, "nincs", "P3"], [16, 42, 52, 0, 6, "P3"], [6, 52, 58, 0, "nincs", "nincs"]]),
    [0, 32, "Átlagos befejezési idő: 7,75", "l", 2], [3, 32, "Befejezési idő: 58", "l", 4],
    ...axis(2, 8, 61), ...axis(11, 8, 61), ...axis(24, 8, 61),
    ...procs(7, 3), ...procs(7, 12), ...procs(7, 25),
  ],
  widths: {
    "Érkezés": 40.500, "CPU idő": 40.500, "Indulás": 41, "Befejezés": 54, "Várakozás": 54.800, "Befejez.": 42.500, "Maradék idő": 70, "Váró proc.": 53.500,
    "Átlagos várakozási idő: 11,25": 155.600, "Átlagos várakozási idő: 7,25": 149.300, "Átlagos befejezési idő: 7,75": 148.700, "Befejezési idő: 58": 95,
    "*RR (10ms)": 51.600, nincs: 28.300, "P2,P1": 26.200, "P1,P3": 26.200, "P3,P4": 26.200, "P4,P3": 26.200, P1: 11.500, P2: 11.500, P3: 11.500, P4: 11.500, FCFS: 23.200, SJF: 15,
    "*P1": 12, "*P2": 12, "*P3": 12, "*P4": 12,
  },
};

const sheet2 = {
  head: 26, headH: 19, font: "text-[14.200px]",
  cols: [...fill(11, 64), 21, ...fill(10, 14), ...fill(32, 21), 16],
  rows: [21, 21, 20, 21, 20, 21, 21, ...fill(7, 20), 21, 21, ...fill(13, 20)],
  sel: [9, 18], hideCol: -1,
  blank: [[10, 8, 10, 14], [10, 12, 54, 13]],
  clear: [[10, 7, 10, 8], [1, 17, 2, 17], [5, 17, 6, 17], [1, 21, 3, 21]],
  bars: gantt(12, [
    [8, 0, 10, "r"], [8, 10, 18, "b"], [8, 18, 22, "r"], [9, 7, 10, "b"], [9, 10, 18, "r"],
    [10, 11, 22, "b"], [10, 22, 32, "r"], [10, 32, 42, "b"], [10, 42, 43, "r"], [11, 20, 32, "b"], [11, 32, 42, "r"],
  ]),
  breaks: [], hbreak: 0,
  boxes: [
    [1, 2, 5, 4, M], [1, 2, 5, 2, "border-b-2"], [1, 7, 9, 15, M], [1, 7, 9, 7, "border-b-2"],
    [5, 7, 5, 7, "border-r-2"], [6, 7, 6, 7, "border-r-2"],
    [11, 7, 54, 11, "-ml-px -mt-px border-t border-l border-b-2 border-b-[#777]"],
  ],
  cells: [
    ...["RR (10ms)", "P1", "P2", "P3", "P4"].map((t, i) => [1 + i, 2, t, "c", 1 + i, true]),
    ...mixed(1, 3, [["Érkezés", 0, 7, 11, 20], ["CPU idő", 14, 8, 36, 10]]),
    ...["Processz", "Érkezés", "CPU idő", "Indulás", "Befejezés", "Turn-Around Time", "Várakozási idő", "Maradék idő", "Váró proc."].map((t, i) => [1 + i, 7, t, "c", 1 + i, true]),
    ...mixed(1, 8, [
      ["P1", 0, 14, 0, 10, 10, 0, 4, "P2,P1"], ["P2", 7, 8, 10, 18, 11, 3, "nincs", "P1,P3"], ["P1*", 10, 4, 18, 22, 12, 8, "nincs", "P3,P4"],
      ["P3", 11, 36, 22, 32, 21, 11, 26, "P4,P3"], ["P4", 20, 10, 32, 42, 22, 12, "nincs", "P3"], ["P3*", 32, 26, 42, 52, 20, 10, 16, "P3"],
      ["P3*", 52, 16, 52, 62, 10, 0, 6, "P3"], ["P3*", 62, 6, 62, 68, 6, 0, "nincs", "nincs"],
    ]),
    [1, 17, "Befejezési idő:68", "l", 2], [5, 17, "Várakozási idő: 11", "l", 6], [1, 21, "Körölfordulási idő: 28", "l", 3],
    ...axis(7, 12, 43), ...procs(11, 8),
  ],
  widths: {
    "*RR (10ms)": 60, "Érkezés": 46.500, "CPU idő": 47.500, "*Processz": 52.500, "*Érkezés": 47, "*CPU idő": 48.500, "*Indulás": 44.500, "*Befejezés": 61.500,
    "*Turn-Around Time": 112, "*Várakozási idő": 88, "*Maradék idő": 74, "*Váró proc.": 62, "P2,P1": 33.300, "P1,P3": 33.300, "P3,P4": 33.300, "P4,P3": 33.300,
    nincs: 31.400, P1: 13.500, P2: 13.500, P3: 13.500, P4: 13.500, "P1*": 21, "P3*": 21, "*P1": 14.500, "*P2": 14.500, "*P3": 14.500, "*P4": 14.500,
    "Befejezési idő:68": 106, "Várakozási idő: 11": 109, "Körölfordulási idő: 28": 132,
  },
};

/* ---------- below the grid ---------- */
const Arrow = ({ cls }) => <div className={"h-0 w-0 " + cls} />;
function TabStrip({ second }) {
  const active = (t) => (
    <div className="flex h-[25px] w-[73px] flex-col items-center justify-between border-x border-b-[3px] border-x-[#ababab] border-b-[#217346] bg-white pt-[5px] font-bold text-[#217346]"><Fit w={48}>{t}</Fit></div>
  );
  return (
    <div className="flex h-[28px] shrink-0 items-start border-b border-[#c8c8c8] bg-[#e6e6e6] text-[12.500px] leading-none">
      <div className="flex h-full w-full items-start border-t border-[#ababab]">
        <Arrow cls="mt-[8px] ml-[27px] border-y-4 border-r-[5px] border-y-transparent border-r-[#bdbdbd]" />
        <Arrow cls="mt-[8px] ml-[24px] border-y-4 border-l-[5px] border-y-transparent border-l-[#bdbdbd]" />
        <div className="-mt-px ml-[39px] flex">
          {second && <div className="flex h-[25px] w-[73px] items-center justify-center border-l border-[#ababab] text-[#444]"><Fit w={44}>Munka1</Fit></div>}
          {active(second ? "Munka2" : "Munka1")}
        </div>
        <svg viewBox="0 0 18 18" className="mt-[3px] ml-[32px] h-[18px] w-[18px] fill-none stroke-[#777]"><circle cx="9" cy="9" r="8" /><path d="M9 5v8M5 9h8" strokeWidth="2" /></svg>
        <div className="flex-1" />
        <div className="mt-[7px] flex w-[2px] flex-col gap-[3px]"><i className="h-[2px] bg-[#b0b0b0]" /><i className="h-[2px] bg-[#b0b0b0]" /><i className="h-[2px] bg-[#b0b0b0]" /></div>
        <div className="mt-[6px] mr-[21px] ml-[16px] flex h-[15px] w-[601px] bg-[#dadada]">
          <div className="flex w-[15px] items-center justify-center border border-[#ababab] bg-white"><Arrow cls="border-y-4 border-r-[5px] border-y-transparent border-r-[#666]" /></div>
          <div className={"-ml-px border border-[#ababab] bg-white " + (second ? "w-[502px]" : "w-[237px]")} />
          <div className="flex-1" />
          <div className="flex w-[15px] items-center justify-center border border-[#ababab] bg-white"><Arrow cls="border-y-4 border-l-[5px] border-y-transparent border-l-[#666]" /></div>
        </div>
      </div>
    </div>
  );
}

function StatusBar({ second }) {
  return (
    <div className="flex h-[21px] shrink-0 items-center bg-[#f3f2f1] text-[11px] leading-none text-[#444]">
      <Fit w={second ? 262 : 22} className="ml-[8px]">{second ? "Válassza ki, hogy hova, majd ENTER vagy Beillesztés" : "Kész"}</Fit>
      <div className="flex-1" />
      <div className="flex h-full w-[39px] items-center justify-center bg-[#c6c6c6]"><svg viewBox="0 0 14 14" className="h-[14px] w-[14px] fill-none stroke-[#333]" strokeWidth="1.200"><path d="M.6.600h12.800v12.800H.600zM5 .600v12.800M9 .600v12.800M.600 5h12.800M.600 9h12.800" /></svg></div>
      <svg viewBox="0 0 14 14" className="ml-[13px] h-[14px] w-[14px] fill-none stroke-[#444]" strokeWidth="1.100"><path d="M.6.600h12.800v12.800H.600zM3.500 2.500h7v9h-7zM5 5h4M5 7h4M5 9h4" /></svg>
      <svg viewBox="0 0 14 14" className="ml-[26px] h-[14px] w-[14px] fill-none stroke-[#444]" strokeWidth="1.100"><path d="M.6.600h12.800v12.800H.600zM4.500.600V8h5M9 .600V8h4.500" /></svg>
      <div className="ml-[19px] h-[1.500px] w-[8px] bg-[#444]" />
      <div className="ml-[5px] flex h-[12px] w-[101px] items-center">
        <div className={"h-px bg-[#a8a8a8] " + (second ? "w-[49px]" : "w-[38px]")} /><div className="h-[11px] w-[5px] bg-[#777]" /><div className="h-px flex-1 bg-[#a8a8a8]" />
        {!second && <><div className="h-[6px] w-px bg-[#a8a8a8]" /><div className="h-px w-[50px] bg-[#a8a8a8]" /></>}
      </div>
      <svg viewBox="0 0 8 8" className="ml-[5px] h-2 w-2 stroke-[#444]" strokeWidth="1.300"><path d="M4 0v8M0 4h8" /></svg>
      <div className="ml-[14px] w-[34px]"><Fit w={second ? 27 : 21}>{second ? "100%" : "79%"}</Fit></div>
    </div>
  );
}

/* ---------- Windows taskbar ---------- */
const I = ({ children }) => <svg viewBox="0 0 24 24" className="h-6 w-6 overflow-visible">{children}</svg>;
function Task({ children, line, active }) {
  return (
    <div className={"flex h-10 w-[49.100px] shrink-0 flex-col items-center justify-between " + (active ? "bg-[#4b5b65]" : "")}>
      <div className="mt-[8px]">{children}</div>
      {line && <div className={"h-[2px] bg-[#76b9ed] " + (active ? "w-full" : "w-[40px]")} />}
    </div>
  );
}
function Taskbar({ time, id }) {
  return (
    <div className="flex h-[40px] shrink-0 items-center bg-linear-to-r from-[#20353f] from-50% to-[#1a2540] to-85% leading-none text-white">
      <svg viewBox="0 0 17 17" className="mx-[15.700px] h-[17px] w-[17px] fill-white"><path d="M0 2.500 7 1.500V8H0zM8 1.300 17 0v8H8zM0 9h7v6.500l-7-1zM8 9h9v8l-9-1.300z" /></svg>
      <div className="flex h-full w-[343.500px] items-center border border-[#c9c9c9] bg-[#f2f2f2] text-[#444]">
        <svg viewBox="0 0 17 17" className="ml-[12px] h-[17px] w-[17px] fill-none stroke-[#333]" strokeWidth="1.200"><circle cx="10.500" cy="6.500" r="5.700" /><path d="M6.500 10.700.500 16.500" /></svg>
        <Fit w={141.500} className="ml-[10.500px] text-[14.500px]">Írjon ide a kereséshez</Fit>
      </div>
      <Task><I><circle cx="12" cy="12" r="7.200" fill="none" stroke="#f4f4f4" strokeWidth="2.200" /></I></Task>
      <Task><I><path d="M4.500 4v3h9V4M4.500 20v-3h9v3M4.500 8.500h9v7h-9zM18 4v16" fill="none" stroke="#eee" strokeWidth="1.300" /><path d="M16.500 8.500h3v3h-3z" fill="#fff" /></I></Task>
      <Task><I>
        <defs><linearGradient id={id + "e"} x1="0" y1="0" x2="1" y2=".6"><stop offset="0" stopColor="#1fa5e8" /><stop offset=".55" stopColor="#31c6cf" /><stop offset="1" stopColor="#6bd84a" /></linearGradient></defs>
        <path d="M0 11c0 7 5 13 12 13 5 0 8-2 10-5-4 2-10 1.500-12-3-1.200-3 .5-5.500 2-6.500C8 5 1 7 0 11z" fill="#0f6cbf" />
        <path d="M12 0C5 0 0 5.500 0 11c2-5 9-5.500 12-2 2 2 1 3.500.5 4.500 0 2 3 3 6 2.500 4-.6 5.500-3.500 5.500-6C23.500 4 18.500 0 12 0z" fill={"url(#" + id + "e)"} />
        <path d="M7 15c0 5 3.500 8.500 7 8.800 4-.3 6.500-2.300 8-4.800-5 2.300-11.500.500-12.500-5-.2-1 0-2 .5-3C8 12 7 13.500 7 15z" fill="#114a8b" />
      </I></Task>
      <Task><I><path d="M1 4h8l2 2.500h12V20H1z" fill="#f7c64b" /><path d="M1 8h22v12.500H1z" fill="#ffdf77" /><path d="M4.500 21v-6.500a2 2 0 0 1 2-2h11a2 2 0 0 1 2 2V21h-4v-4h-7v4z" fill="#3f9ae0" /><path d="M1 3.500h8V6H1z" fill="#e8a020" /></I></Task>
      <Task><I><path d="M7 6V1.500h10V6" fill="none" stroke="#eee" strokeWidth="1.500" /><path d="M.5 5.500h23V24H.500z" fill="#f3f3f3" /><path d="M7 10h4.500v4.500H7z" fill="#f25022" /><path d="M12.500 10H17v4.500h-4.500z" fill="#7fba00" /><path d="M7 15.500h4.500V20H7z" fill="#00a4ef" /><path d="M12.500 15.500H17V20h-4.500z" fill="#ffb900" /></I></Task>
      <Task><I><path d="M0 9 12 1l12 8v3H0z" fill="#0f5aa8" /><path d="M1 9h22L12 18z" fill="#f4f8fb" /><path d="M0 9l12 8.500L0 23z" fill="#1f8fdc" /><path d="M24 9v14H0z" fill="#2fb0ee" /><path d="M0 9.500v13.500L16 14l-4 3.200z" fill="#1b86d6" /></I></Task>
      <Task><I><path d="M1 1h13l4 4v17H1z" fill="#f0f0f0" /><path d="M3 3h3v18H3z" fill="#bcbcbc" /><path d="M10 15v-3c0-2 6-2 6.500 0v4h-5c-2 0-2 3-2 4-2.500-1-2.500-6 .500-5z" fill="#3b74a8" /><path d="M17.500 13.500c4-.500 5 2 4.500 5h-4v1h3v2c-.5 2.500-7 2.500-7 0v-3c0-1 1-1.500 3.500-1.500z" fill="#ffd43b" /></I></Task>
      <Task line><I><circle cx="12" cy="12" r="11.500" fill="#e94335" /><path d="M2 6.300A11.500 11.500 0 0 0 11 23.450L16.800 14z" fill="#34a853" /><path d="M22.200 6.700A11.500 11.500 0 0 1 11 23.450L17 12l-4-5.300z" fill="#fbbc05" /><circle cx="12" cy="12" r="5.500" fill="#fff" /><circle cx="12" cy="12" r="4.300" fill="#4285f4" /></I></Task>
      <Task line active><I><path d="M6 1h18v22H6z" fill="#21a366" /><path d="M6 12h18v11H6z" fill="#107c41" /><path d="M15 1h9v5.500h-9z" fill="#33c481" /><path d="M6 17h18v6H6z" fill="#185c37" /><path d="M0 6h12v12H0z" fill="#0f703b" /><text x="2.800" y="15.800" fill="#fff" className="text-[10.500px] font-bold">X</text></I></Task>
      <Task line><I><ellipse cx="11" cy="14" rx="11" ry="9.500" fill="#d5e9f7" /><circle cx="5" cy="13" r="2" fill="#e5483a" /><circle cx="9" cy="8.500" r="2" fill="#52b04b" /><circle cx="14" cy="8" r="1.800" fill="#f4c430" /><circle cx="10.500" cy="15" r="2.200" fill="#20353f" /><path d="m12 23 7-18 2 1-6 17z" fill="#d08b3c" /><path d="M18.500 6 20 1l4 1.500L21.500 7z" fill="#a5713a" /></I></Task>
      <Task line><I><path d="M6 1h18v22H6z" fill="#2b7cd3" /><path d="M6 1h18v5.500H6z" fill="#41a5ee" /><path d="M6 12h18v11H6z" fill="#185abd" /><path d="M6 17.500h18V23H6z" fill="#103f91" /><path d="M0 6h12v12H0z" fill="#185abd" /><text x="1.200" y="15.700" fill="#fff" className="text-[10px] font-bold">W</text></I></Task>
      <div className="flex-1" />
      <svg viewBox="0 0 12 7" className="h-[7px] w-[12px] fill-none stroke-white" strokeWidth="1.300"><path d="M.5 6.500 6 1l5.500 5.500" /></svg>
      <svg viewBox="0 0 16 16" className="ml-[10px] h-4 w-4"><path d="M4 10.500A3.500 3.500 0 0 1 3 4 4.500 4.500 0 0 1 11 3c2.500 0 3.500 2 3.500 3.500v4z" fill="#cfcfcf" /><circle cx="11.500" cy="11" r="4.500" fill="#e02020" /><path d="m9.800 9.300 3.400 3.400M13.200 9.300l-3.400 3.400" stroke="#fff" strokeWidth="1.400" /></svg>
      <svg viewBox="0 0 17 12" className="ml-[8px] h-[12px] w-[17px] fill-none stroke-white" strokeWidth="1.100"><path d="M6 2.500h9v7.500H3.500M16.500 5v3M2.600 6v4h2" /><path d="M.800 3h3.600v2.500H.800zM1.500.500v2M3.700.500v2M5.500 4.500H13v3.500H5.500z" fill="#fff" /></svg>
      <svg viewBox="0 0 14 14" className="ml-[10px] h-[14px] w-[14px] fill-none stroke-[#ddd]" strokeWidth="1.200"><path d="M.600 13C1 6 6 1 13 .600M4 13c.300-5 4-8.700 9-9M7.300 13c.200-3.300 2.500-5.500 5.700-5.700" /><path d="M10 13c0-2 1-3 3-3v3z" fill="#eee" /></svg>
      <div className="-mt-[2px] ml-[10px] flex w-[64px] flex-col items-center gap-[7px] text-[11.300px]"><Fit w={27}>{time}</Fit><Fit w={62.500}>2021. 03. 16.</Fit></div>
      <svg viewBox="0 0 26 26" className="mt-[4px] ml-[17px] h-[26px] w-[26px]"><path d="M1 1h16v13H8l-3.500 3.500V14H1z" fill="#fff" /><path d="M4 4.500h10M4 7.500h10M4 10.500h7" stroke="#1a2540" strokeWidth="1.200" /><circle cx="16.500" cy="17" r="7.500" fill="#2c3138" stroke="#8b8f94" /><text x="13.800" y="21" fill="#fff" className="text-[10.500px] font-bold">1</text></svg>
      <div className="mr-[4px] ml-[10px] h-full w-px bg-[#7b8291]" />
    </div>
  );
}

function Scroll({ second }) {
  const btn = "flex h-[15px] w-full shrink-0 items-center justify-center border border-[#ababab] bg-white";
  return (
    <div className="flex h-[604px] w-[21px] flex-col bg-[#e6e6e6] pt-[2px] pr-[3px] pl-[3px]">
      <div className={btn}><Arrow cls="border-x-4 border-b-[5px] border-x-transparent border-b-[#777]" /></div>
      <div className={"mt-px w-full shrink-0 border border-[#ababab] bg-white " + (second ? "h-[550px]" : "h-[554px]")} />
      <div className="w-full flex-1 bg-[#dadada]" />
      <div className={btn}><Arrow cls="border-x-4 border-t-[5px] border-x-transparent border-t-[#777]" /></div>
    </div>
  );
}

function ExcelWindow({ sheet, second, name, nw, time }) {
  return (
    <div className="relative flex h-[900px] w-[1600px] flex-col overflow-hidden bg-[#f3f2f1] font-['Open_Sans','Noto_Sans',sans-serif]">
      <TitleBar />
      <Tabs />
      <Ribbon second={second} />
      <FormulaBar name={name} nw={nw} />
      <div className="flex shrink-0"><Sheet s={sheet} /><Scroll second={second} /></div>
      <TabStrip second={second} />
      <StatusBar second={second} />
      <Taskbar time={time} id={second ? "b" : "a"} />
      <div className="absolute top-[776px] left-[1241px] leading-none text-[#8c8c8c]/75">
        <Fit w={182} className="text-[20.500px]">Aktiválja a Windowst</Fit>
        <Fit w={292} className="mt-[5px] text-[14.500px]">Aktiválja a Windows rendszert a Gépházban.</Fit>
      </div>
    </div>
  );
}

export default function App() {
  return (
    <div className="flex h-[2828px] w-[2000px] flex-col overflow-hidden bg-white">
      <div className="mt-[244.500px] ml-[299px] h-[69px] font-['Lato',sans-serif] text-[32px] leading-[34px] text-black"><Fit w={26.500}>1.</Fit></div>
      <div className="ml-[33.800px] h-[1078.500px] w-[1917.500px]">
        <div className="h-[900px] w-[1600px] origin-top-left scale-[1.1984]"><ExcelWindow sheet={sheet1} name="G35" nw={22.500} time="16:53" /></div>
      </div>
      <div className="mt-[6px] ml-[239px] h-[70px] font-['Lato',sans-serif] text-[32px] leading-[34px] text-black"><Fit w={27}>2.</Fit></div>
      <div className="ml-[238px] h-[857px] w-[1524px]">
        <div className="h-[900px] w-[1600px] origin-top-left scale-[0.9523]"><ExcelWindow sheet={sheet2} second name="J18" nw={19} time="17:52" /></div>
      </div>
    </div>
  );
}
